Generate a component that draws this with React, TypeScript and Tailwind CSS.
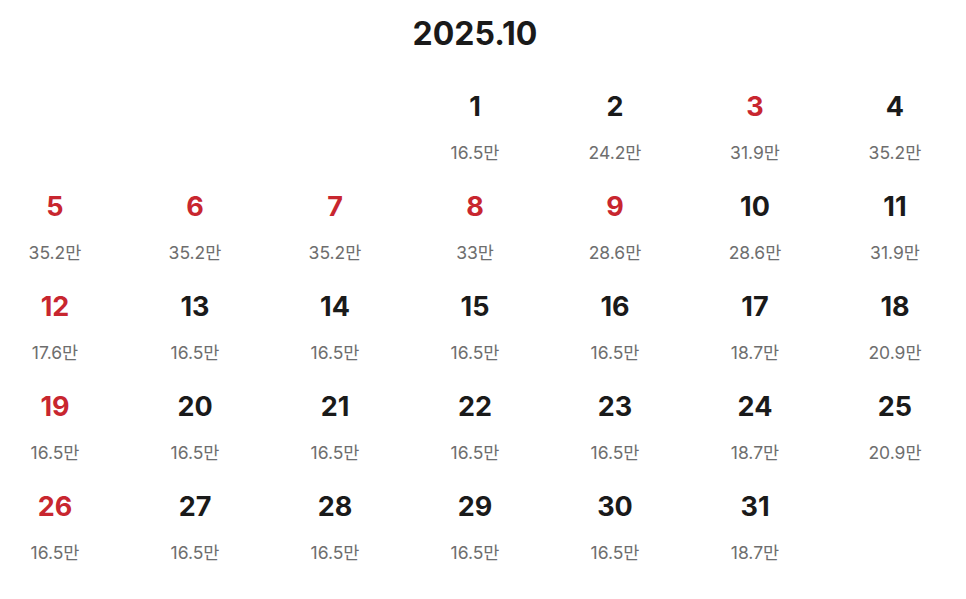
import React from "react";

const prices: Record<number, string> = {
  1: "16.5", 2: "24.2", 3: "31.9", 4: "35.2",
  5: "35.2", 6: "35.2", 7: "35.2", 8: "33", 9: "28.6", 10: "28.6", 11: "31.9",
  12: "17.6", 13: "16.5", 14: "16.5", 15: "16.5", 16: "16.5", 17: "18.7", 18: "20.9",
  19: "16.5", 20: "16.5", 21: "16.5", 22: "16.5", 23: "16.5", 24: "18.7", 25: "20.9",
  26: "16.5", 27: "16.5", 28: "16.5", 29: "16.5", 30: "16.5", 31: "18.7",
};
const red = new Set([3, 5, 6, 7, 8, 9, 12, 19, 26]);

export default function App() {
  const cells: (number | null)[] = [null, null, null];
  for (let d = 1; d <= 31; d++) cells.push(d);
  return (
    <div
      className="w-[950px] bg-white pt-[14px]"
      style={{ fontFamily: "Inter, 'Noto Sans CJK KR', sans-serif" }}
    >
      <h1 className="text-center text-[32px] leading-[40px] font-bold text-[#1a1a1a]">
        2025.10
      </h1>
      <div className="mt-[37px] grid grid-cols-[repeat(7,110px)] gap-x-[30px]">
        {cells.map((d, i) => (
          <div key={i} className="flex h-[100px] flex-col items-center">
            {d !== null && (
              <>
                <span
                  className={`text-[27px] leading-[32px] font-bold ${
                    red.has(d) ? "text-[#c8262f]" : "text-[#1a1a1a]"
                  }`}
                >
                  {d}
                </span>
                <span className="mt-[20px] text-[17.5px] leading-[20px] text-[#6e6e6e]">
                  {prices[d]}만
                </span>
              </>
            )}
          </div>
        ))}
      </div>
    </div>
  );
}
